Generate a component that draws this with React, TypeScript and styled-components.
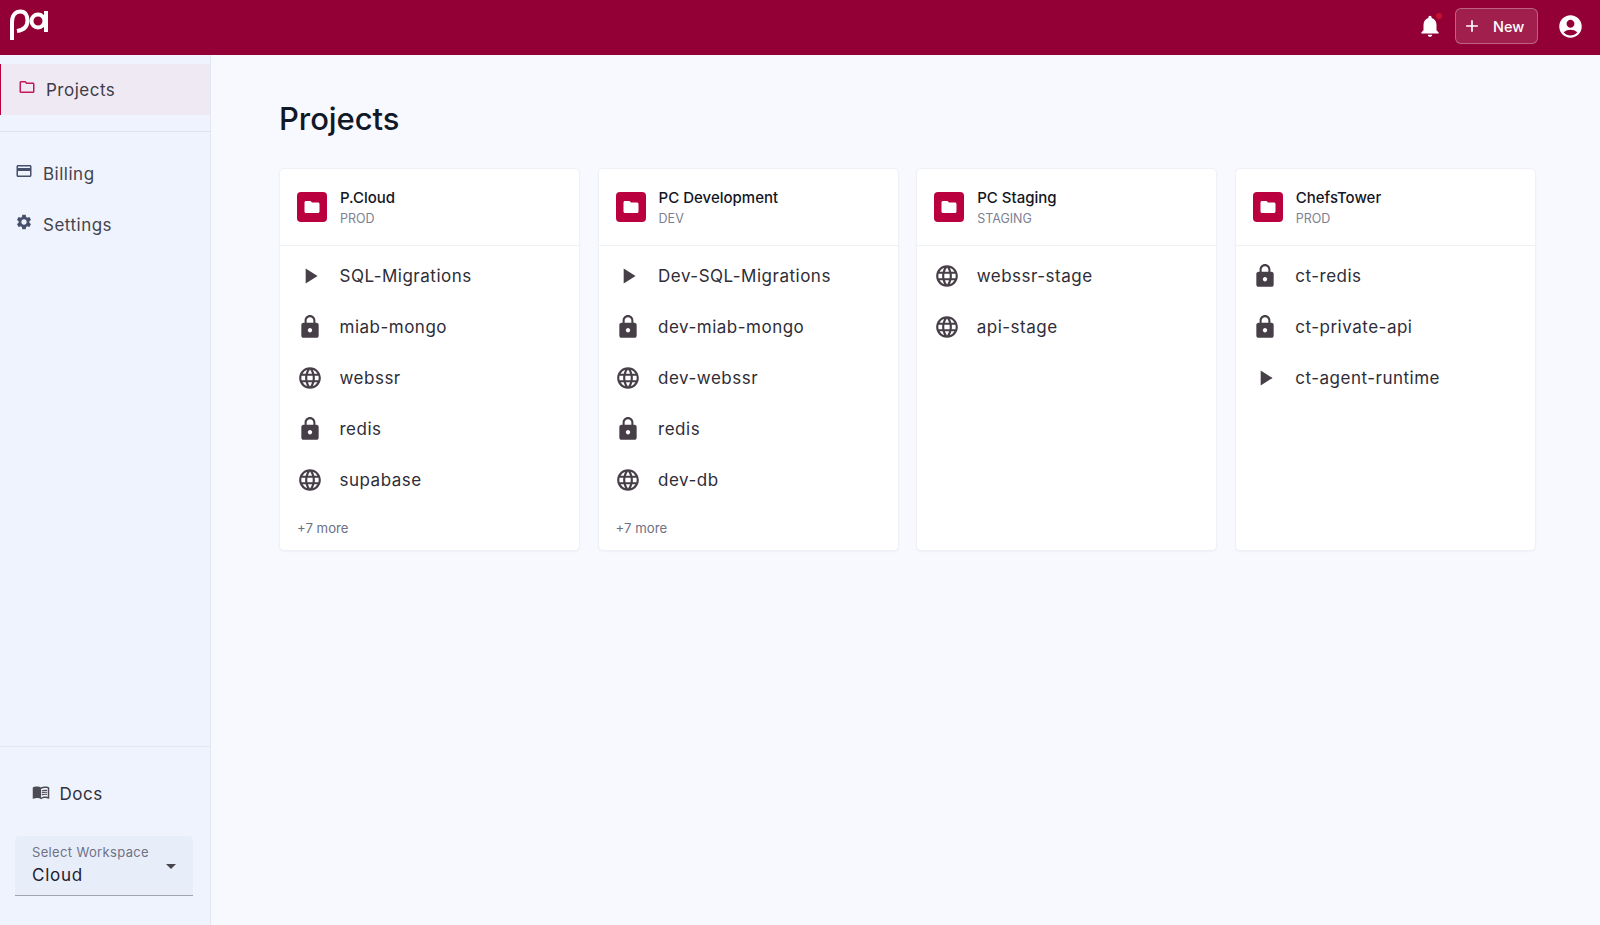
import styled, { createGlobalStyle } from "styled-components";
import {
  MdAccountCircle,
  MdAdd,
  MdArrowDropDown,
  MdFolder,
  MdLanguage,
  MdLock,
  MdMenuBook,
  MdNotifications,
  MdOutlineCreditCard,
  MdOutlineFolder,
  MdPlayArrow,
  MdSettings,
} from "react-icons/md";

type ServiceKind = "job" | "private" | "web";

interface Project {
  name: string;
  env: string;
  services: { name: string; kind: ServiceKind }[];
  more?: number;
}

const projects: Project[] = [
  {
    name: "P.Cloud",
    env: "PROD",
    more: 7,
    services: [
      { name: "SQL-Migrations", kind: "job" },
      { name: "miab-mongo", kind: "private" },
      { name: "webssr", kind: "web" },
      { name: "redis", kind: "private" },
      { name: "supabase", kind: "web" },
    ],
  },
  {
    name: "PC Development",
    env: "DEV",
    more: 7,
    services: [
      { name: "Dev-SQL-Migrations", kind: "job" },
      { name: "dev-miab-mongo", kind: "private" },
      { name: "dev-webssr", kind: "web" },
      { name: "redis", kind: "private" },
      { name: "dev-db", kind: "web" },
    ],
  },
  {
    name: "PC Staging",
    env: "STAGING",
    services: [
      { name: "webssr-stage", kind: "web" },
      { name: "api-stage", kind: "web" },
    ],
  },
  {
    name: "ChefsTower",
    env: "PROD",
    services: [
      { name: "ct-redis", kind: "private" },
      { name: "ct-private-api", kind: "private" },
      { name: "ct-agent-runtime", kind: "job" },
    ],
  },
];

const kindIcons = {
  job: MdPlayArrow,
  private: MdLock,
  web: MdLanguage,
};

export default function App() {
  return (
    <>
      <GlobalStyle />
      <Page>
        <Header>
          <Logo viewBox="0 0 40 32" aria-label="logo">
            <path d="M3 31V13C3 6 7 2.5 11.5 2.5C16 2.5 18.5 6 18.5 11.5C18.5 18 15 21 8 22" />
            <circle cx="29" cy="12" r="6.5" />
            <path d="M37 2V23" />
          </Logo>
          <HeaderActions>
            <Bell>
              <MdNotifications size={26} />
              <BellDot />
            </Bell>
            <NewButton>
              <MdAdd size={20} />
              <span>New</span>
            </NewButton>
            <Account>
              <MdAccountCircle size={27} />
            </Account>
          </HeaderActions>
        </Header>
        <Body>
          <Sidebar>
            <ActiveItem>
              <ActiveIcon>
                <MdOutlineFolder size={18} />
              </ActiveIcon>
              Projects
            </ActiveItem>
            <Divider />
            <NavGroup>
              <NavItem>
                <NavIcon>
                  <MdOutlineCreditCard size={18} />
                </NavIcon>
                Billing
              </NavItem>
              <NavItem>
                <NavIcon>
                  <MdSettings size={18} />
                </NavIcon>
                Settings
              </NavItem>
            </NavGroup>
            <SidebarBottom>
              <DocsItem>
                <DocsIcon>
                  <MdMenuBook size={18} />
                </DocsIcon>
                Docs
              </DocsItem>
              <WorkspaceSelect>
                <WorkspaceLabel>Select Workspace</WorkspaceLabel>
                <WorkspaceValue>Cloud</WorkspaceValue>
                <SelectArrow>
                  <MdArrowDropDown size={24} />
                </SelectArrow>
              </WorkspaceSelect>
            </SidebarBottom>
          </Sidebar>
          <Main>
            <Title>Projects</Title>
            <CardGrid>
              {projects.map((project) => (
                <Card key={project.name}>
                  <CardHeader>
                    <FolderBadge>
                      <MdFolder size={18} />
                    </FolderBadge>
                    <div>
                      <ProjectName>{project.name}</ProjectName>
                      <ProjectEnv>{project.env}</ProjectEnv>
                    </div>
                  </CardHeader>
                  <ServiceList>
                    {project.services.map((service) => {
                      const Icon = kindIcons[service.kind];
                      return (
                        <ServiceRow key={service.name}>
                          <ServiceIcon>
                            <Icon size={26} />
                          </ServiceIcon>
                          {service.name}
                        </ServiceRow>
                      );
                    })}
                  </ServiceList>
                  {project.more && <More>+{project.more} more</More>}
                </Card>
              ))}
            </CardGrid>
          </Main>
        </Body>
      </Page>
    </>
  );
}

const GlobalStyle = createGlobalStyle`
  html, body {
    margin: 0;
    padding: 0;
  }
  body {
    font-family: Inter, "Liberation Sans", sans-serif;
    background: #f8f9ff;
  }
`;

const Page = styled.div`
  display: flex;
  flex-direction: column;
  height: 925px;
  overflow: hidden;
`;

const Header = styled.header`
  display: flex;
  align-items: flex-start;
  justify-content: space-between;
  height: 55px;
  flex-shrink: 0;
  background: #930035;
  color: #fff;
`;

const Logo = styled.svg`
  width: 40px;
  height: 32px;
  margin: 9px 0 0 9px;
  fill: none;
  stroke: #fff;
  stroke-width: 4;
`;

const HeaderActions = styled.div`
  display: flex;
  align-items: center;
  height: 52px;
  padding-right: 16px;
`;

const Bell = styled.div`
  position: relative;
  display: flex;
  margin-right: 12px;
`;

const BellDot = styled.span`
  position: absolute;
  top: 0;
  right: 1px;
  width: 6px;
  height: 6px;
  border-radius: 50%;
  background: #c8102e;
`;

const NewButton = styled.div`
  display: flex;
  align-items: center;
  gap: 11px;
  width: 83px;
  height: 36px;
  box-sizing: border-box;
  padding-left: 6px;
  margin-right: 19px;
  border: 1px solid rgba(255, 255, 255, 0.3);
  border-radius: 6px;
  background: rgba(255, 255, 255, 0.12);
  font-size: 14.5px;
  font-weight: 500;
`;

const Account = styled.div`
  display: flex;
`;

const Body = styled.div`
  display: flex;
  flex: 1;
  min-height: 0;
`;

const Sidebar = styled.aside`
  display: flex;
  flex-direction: column;
  width: 211px;
  flex-shrink: 0;
  box-sizing: border-box;
  padding-top: 9px;
  background: #eff3fd;
  border-right: 1px solid #e4e7f0;
`;

const ActiveItem = styled.div`
  display: flex;
  align-items: center;
  height: 51px;
  box-sizing: border-box;
  padding-left: 17px;
  border-left: 1px solid #bb0040;
  background: #efe9f3;
  color: #3e3b47;
  font-size: 17px;
  letter-spacing: 0.5px;
`;

const ActiveIcon = styled.span`
  display: flex;
  width: 28px;
  margin-top: -5px;
  color: #c2185b;
`;

const Divider = styled.div`
  height: 1px;
  margin-top: 16px;
  background: #dfe2ec;
`;

const NavGroup = styled.nav`
  display: flex;
  flex-direction: column;
  padding-top: 16px;
`;

const NavItem = styled.div`
  display: flex;
  align-items: center;
  height: 51px;
  padding-left: 15px;
  color: #45434e;
  font-size: 17px;
  letter-spacing: 0.5px;
`;

const NavIcon = styled.span`
  display: flex;
  width: 28px;
  margin-top: -5px;
  color: #47506b;
`;

const SidebarBottom = styled.div`
  margin-top: auto;
  padding-bottom: 29px;
  border-top: 1px solid #e4e7f0;
`;

const DocsItem = styled(NavItem)`
  padding-left: 32px;
  margin-top: 21.5px;
  color: #2f3040;
`;

const DocsIcon = styled(NavIcon)`
  width: 27.5px;
  color: #4b4a55;
`;

const WorkspaceSelect = styled.div`
  position: relative;
  width: 178px;
  height: 60px;
  box-sizing: border-box;
  margin: 16.5px 0 0 15px;
  padding: 8px 17px 0;
  background: #e8edfa;
  border-bottom: 1px solid #9fa3b3;
  border-radius: 4px 4px 0 0;
`;

const WorkspaceLabel = styled.div`
  color: #6f7285;
  font-size: 13px;
  line-height: 16px;
  letter-spacing: 0.35px;
`;

const WorkspaceValue = styled.div`
  margin-top: 4px;
  color: #1d2030;
  font-size: 17px;
  line-height: 22px;
  letter-spacing: 0.75px;
`;

const SelectArrow = styled.span`
  position: absolute;
  top: 18px;
  right: 10px;
  display: flex;
  color: #49454f;
`;

const Main = styled.main`
  flex: 1;
  min-width: 0;
  padding: 44px 60px 0 68px;
`;

const Title = styled.h1`
  margin: 0 0 30px;
  color: #111827;
  font-size: 31px;
  line-height: 39px;
  font-weight: 500;
  letter-spacing: -0.05px;
`;

const CardGrid = styled.div`
  display: grid;
  grid-template-columns: repeat(4, 301px);
  gap: 17.6px;
`;

const Card = styled.section`
  display: flex;
  flex-direction: column;
  height: 383px;
  box-sizing: border-box;
  background: #fff;
  border: 1px solid #f0f1f6;
  border-radius: 5px;
  box-shadow: 0 1px 2px rgba(30, 40, 80, 0.04);
`;

const CardHeader = styled.div`
  display: flex;
  align-items: center;
  gap: 13px;
  height: 77px;
  flex-shrink: 0;
  box-sizing: border-box;
  padding-left: 17px;
  border-bottom: 1px solid #eff0f4;
`;

const FolderBadge = styled.div`
  display: flex;
  align-items: center;
  justify-content: center;
  width: 30px;
  height: 30px;
  border-radius: 4px;
  background: #bb0040;
  color: #fff;
`;

const ProjectName = styled.div`
  color: #14161f;
  font-size: 15px;
  line-height: 20px;
  font-weight: 500;
`;

const ProjectEnv = styled.div`
  margin-top: 2px;
  color: #7d8093;
  font-size: 12.5px;
  line-height: 17px;
`;

const ServiceList = styled.div`
  display: flex;
  flex-direction: column;
  padding-top: 4px;
`;

const ServiceRow = styled.div`
  display: flex;
  align-items: center;
  height: 51px;
  padding-left: 16.5px;
  color: #2e2d38;
  font-size: 17px;
  letter-spacing: 0.5px;
`;

const ServiceIcon = styled.span`
  display: flex;
  justify-content: center;
  width: 26px;
  margin-right: 17px;
  color: #473f47;
`;

const More = styled.div`
  margin-top: auto;
  padding: 0 0 13px 17px;
  color: #6e7184;
  font-size: 13.2px;
  line-height: 18px;
`;
